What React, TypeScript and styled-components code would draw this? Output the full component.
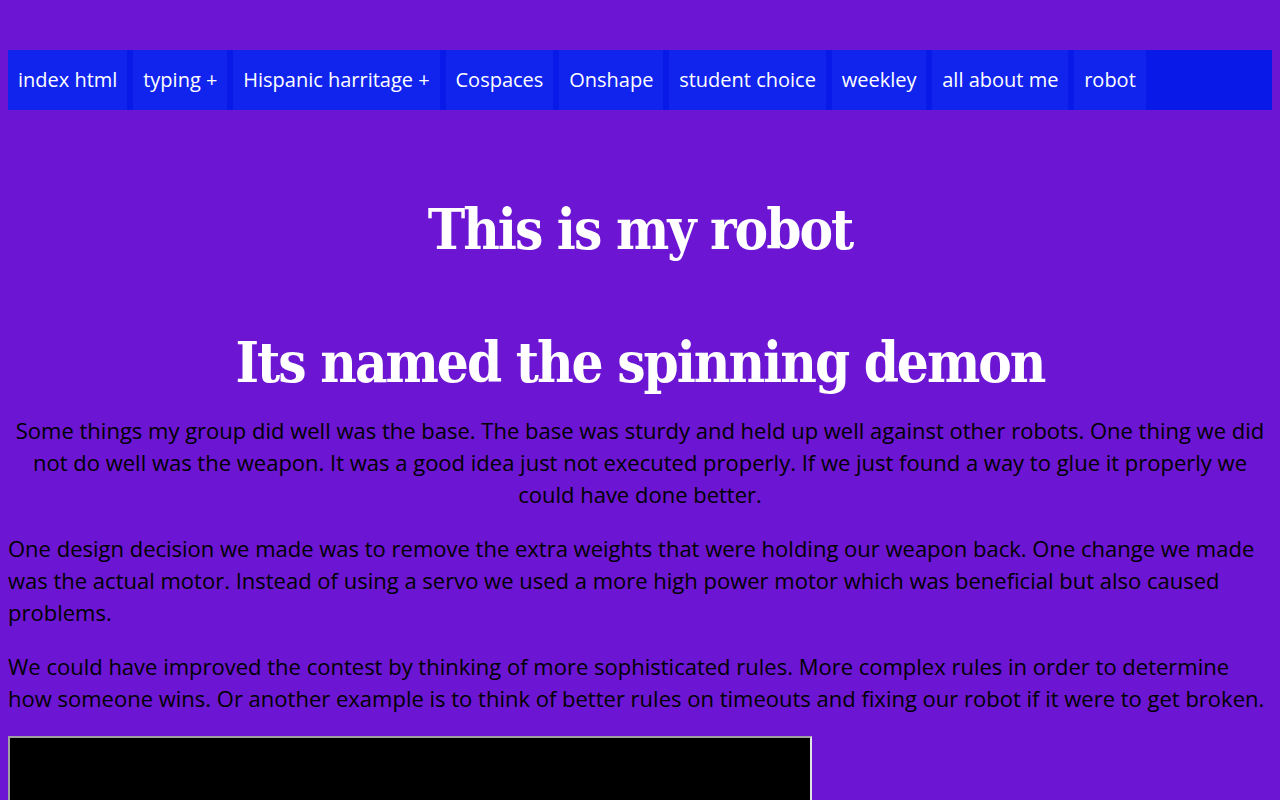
import styled, { createGlobalStyle } from "styled-components";

const GlobalStyle = createGlobalStyle`
  body {
    margin: 8px;
    background-color: #6c15d2;
    font-family: "Open Sans", "Liberation Sans", sans-serif;
  }
`;

const NavBar = styled.nav`
  margin-top: 42px;
  display: flex;
  gap: 5.8px;
  height: 60px;
  background-color: #0819e8;
`;

const NavItem = styled.a`
  display: flex;
  align-items: center;
  padding: 0 10px 2px;
  background-color: #1024ee;
  color: #ffffff;
  font-size: 20px;
  text-decoration: none;
  white-space: nowrap;
`;

const Heading = styled.h1<{ $top: number }>`
  margin: ${({ $top }) => $top}px 0 0;
  text-align: center;
  color: #ffffff;
  font-family: "DejaVu Serif Condensed", "DejaVu Serif", serif;
  font-weight: bold;
  font-size: 56px;
  letter-spacing: -2px;
  line-height: 1.2;
`;

const Text = styled.p<{ $center?: boolean; $top?: number }>`
  margin: ${({ $top }) => $top ?? 22}px 0 22px;
  color: #000000;
  font-size: 22px;
  line-height: 32px;
  text-align: ${({ $center }) => ($center ? "center" : "left")};
`;

const Video = styled.div`
  width: 800px;
  height: 450px;
  background-color: #000000;
  border: 2px solid;
  border-color: #a0a0a0 #e4e4e4 #e4e4e4 #a0a0a0;
`;

const links = [
  "index html",
  "typing +",
  "Hispanic harritage +",
  "Cospaces",
  "Onshape",
  "student choice",
  "weekley",
  "all about me",
  "robot",
];

export default function App() {
  return (
    <>
      <GlobalStyle />
      <NavBar>
        {links.map((l) => (
          <NavItem key={l} href="#">
            {l}
          </NavItem>
        ))}
      </NavBar>
      <Heading $top={86}>This is my robot</Heading>
      <Heading $top={66}>Its named the spinning demon</Heading>
      <Text $center $top={18}>
        Some things my group did well was the base. The base was sturdy and held up well against other
        robots. One thing we did not do well was the weapon. It was a good idea just not executed
        properly. If we just found a way to glue it properly we could have done better.
      </Text>
      <Text>
        One design decision we made was to remove the extra weights that were holding our weapon back.
        One change we made was the actual motor. Instead of using a servo we used a more high power
        motor which was beneficial but also caused problems.
      </Text>
      <Text>
        We could have improved the contest by thinking of more sophisticated rules. More complex rules
        in order to determine how someone wins. Or another example is to think of better rules on
        timeouts and fixing our robot if it were to get broken.
      </Text>
      <Video />
    </>
  );
}
